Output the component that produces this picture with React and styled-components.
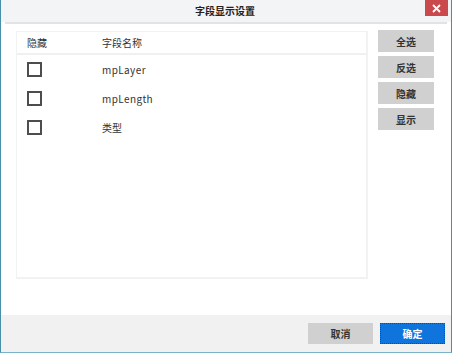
import React from "react";
import styled, { createGlobalStyle } from "styled-components";

const Global = createGlobalStyle`
  html, body { margin: 0; padding: 0; background: #ffffff; }
  * { box-sizing: border-box; }
`;

const Window = styled.div`
  width: 452px;
  height: 353px;
  display: flex;
  flex-direction: column;
  background: #ffffff;
  border-left: 1px solid #4a8fa8;
  border-right: 1px solid #4a8fa8;
  border-bottom: 1px solid #78b3c9;
  font-family: "Noto Sans CJK SC", "Noto Sans", sans-serif;
  color: #333333;
`;

const TitleBar = styled.div`
  height: 22px;
  flex: none;
  display: grid;
  grid-template-columns: 24px 1fr 24px;
  align-items: start;
  background: #f3f4f5;
  padding-right: 2px;
`;

const Title = styled.div`
  grid-column: 2;
  text-align: center;
  font-size: 10px;
  font-weight: 700;
  line-height: 22px;
  color: #222;
`;

const Close = styled.div`
  grid-column: 3;
  width: 23px;
  height: 16px;
  background: #c9494c;
  color: #fff;
  display: flex;
  align-items: center;
  justify-content: center;
`;

const Separator = styled.div`
  height: 2px;
  margin: 0 4px;
  background: #e2e3e4;
  flex: none;
`;

const Body = styled.div`
  flex: 1;
  display: flex;
  gap: 10px;
  padding: 7px 0 0 15px;
`;

const Panel = styled.div`
  width: 352px;
  height: 248px;
  border: 1px solid #f2f2f2;
  border-right-width: 2px;
  border-bottom-width: 2px;
  background: #fff;
`;

const Row = styled.div`
  display: flex;
  align-items: center;
  height: ${(p) => (p.$header ? 23 : 29)}px;
  border-bottom: ${(p) => (p.$header ? "2px solid #f0f0f0" : "none")};
  font-size: 10px;
`;

const HideCell = styled.div`
  width: 85px;
  padding-left: 10px;
  display: flex;
  align-items: center;
`;

const NameCell = styled.div`
  flex: 1;
  letter-spacing: ${(p) => (p.$latin ? "0.4px" : "0")};
`;

const Check = styled.div`
  width: 15px;
  height: 15px;
  border: 2px solid #4d4d4d;
  background: #fff;
`;

const Side = styled.div`
  display: flex;
  flex-direction: column;
  gap: 4px;
  margin-top: -1px;
`;

const SideButton = styled.div`
  width: 56px;
  height: 22px;
  background: #d0d0d0;
  display: flex;
  align-items: center;
  justify-content: center;
  font-size: 10px;
  font-weight: 600;
  color: #333;
`;

const Footer = styled.div`
  height: 37px;
  flex: none;
  background: #f1f1f1;
  display: flex;
  justify-content: flex-end;
  align-items: flex-start;
  gap: 7px;
  padding: 8px 6px 0 0;
`;

const FooterButton = styled.div`
  width: 65px;
  height: 21px;
  display: flex;
  align-items: center;
  justify-content: center;
  font-size: 10px;
  font-weight: 600;
  background: ${(p) => (p.$primary ? "#0f74db" : "#d0d0d0")};
  color: ${(p) => (p.$primary ? "#ffffff" : "#333333")};
  outline: ${(p) => (p.$primary ? "1px dotted #0a4f9e" : "none")};
  outline-offset: -1px;
`;

const fields = ["mpLayer", "mpLength", "类型"];

export default function App() {
  return (
    <>
      <Global />
      <Window>
        <TitleBar>
          <Title>字段显示设置</Title>
          <Close>
            <svg width="9" height="9" viewBox="0 0 9 9">
              <path d="M1 1L8 8M8 1L1 8" stroke="#fff" strokeWidth="1.8" />
            </svg>
          </Close>
        </TitleBar>
        <Separator />
        <Body>
          <Panel>
            <Row $header>
              <HideCell>隐藏</HideCell>
              <NameCell>字段名称</NameCell>
            </Row>
            {fields.map((f) => (
              <Row key={f}>
                <HideCell>
                  <Check />
                </HideCell>
                <NameCell $latin={/^[a-z]/i.test(f)}>{f}</NameCell>
              </Row>
            ))}
          </Panel>
          <Side>
            <SideButton>全选</SideButton>
            <SideButton>反选</SideButton>
            <SideButton>隐藏</SideButton>
            <SideButton>显示</SideButton>
          </Side>
        </Body>
        <Footer>
          <FooterButton>取消</FooterButton>
          <FooterButton $primary>确定</FooterButton>
        </Footer>
      </Window>
    </>
  );
}
